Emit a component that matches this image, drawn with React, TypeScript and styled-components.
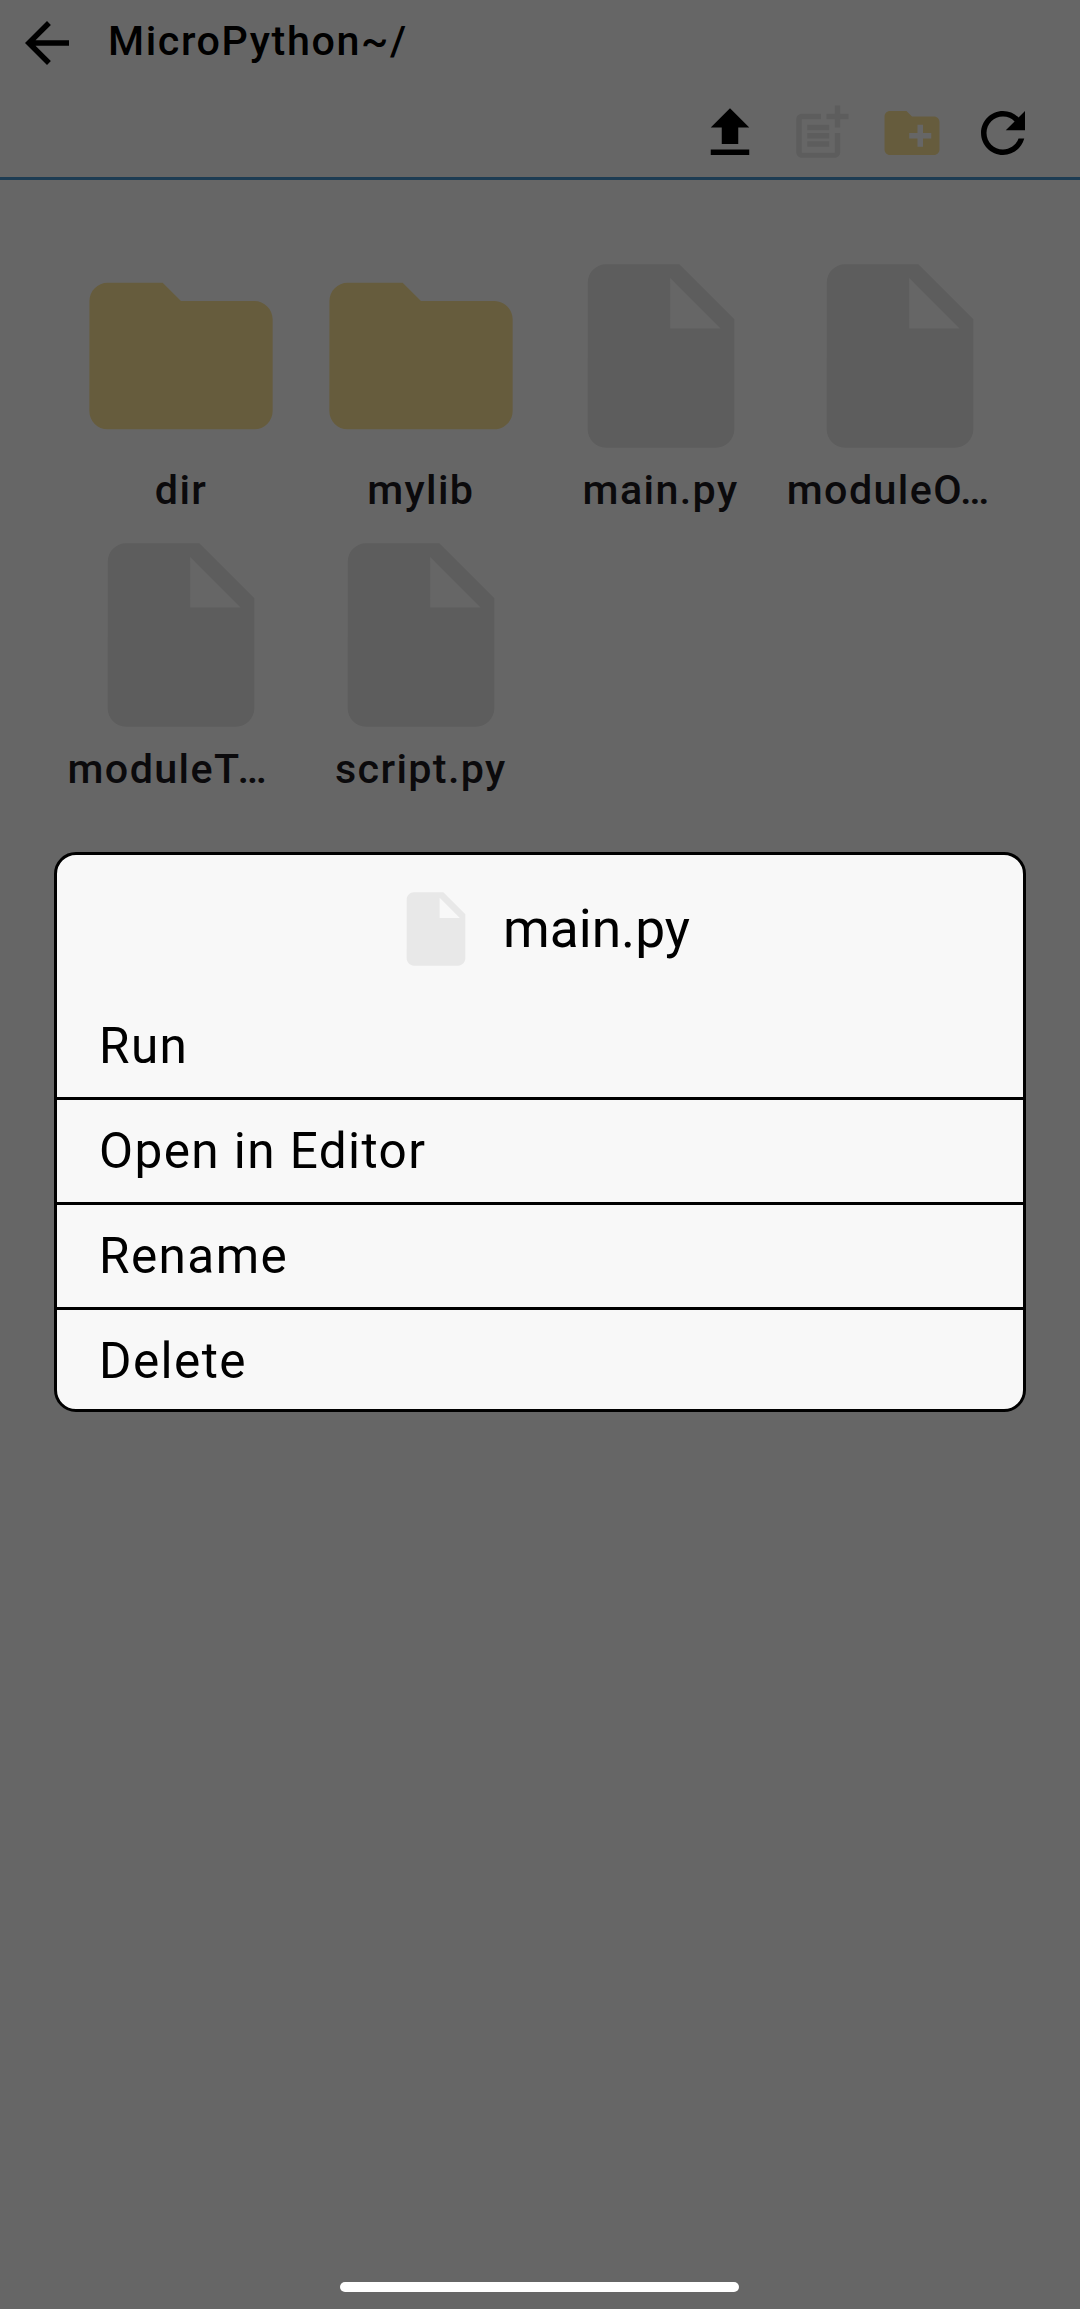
import React from "react";
import styled, { createGlobalStyle } from "styled-components";

const GlobalStyle = createGlobalStyle`
  *, *::before, *::after { box-sizing: border-box; }
  body { margin: 0; background: #ffffff; }
`;

const Screen = styled.div`
  position: relative;
  height: 2309px;
  overflow: hidden;
  background: #ffffff;
  font-family: Roboto, "Noto Sans", sans-serif;
  color: #1c1b1f;
`;

const Header = styled.header`
  display: flex;
  flex-direction: column;
  height: 180px;
  border-bottom: 3px solid #4996cf;
  color: #000000;
`;

const TitleBar = styled.div`
  display: flex;
  align-items: flex-start;
  height: 100px;
  padding: 10px 0 0 14px;
`;

const Title = styled.h1`
  margin: 0 0 0 28px;
  font-size: 41.25px;
  line-height: 62px;
  font-weight: 500;
  letter-spacing: 1.6px;
`;

const Actions = styled.nav`
  display: flex;
  justify-content: flex-end;
  gap: 25px;
  padding-right: 44px;
`;

const Svg = styled.svg<{ $size: number; $color: string }>`
  display: block;
  flex: none;
  width: ${(p) => p.$size}px;
  height: ${(p) => p.$size}px;
  fill: ${(p) => p.$color};
`;

const Grid = styled.main`
  display: grid;
  grid-template-columns: repeat(4, 239.75px);
  grid-auto-rows: 279px;
  padding: 66px 0 0 61.2px;
`;

const Entry = styled.div`
  display: flex;
  flex-direction: column;
  align-items: center;
`;

const EntryName = styled.span<{ $truncated: boolean }>`
  width: 227px;
  overflow: hidden;
  white-space: nowrap;
  text-align: ${(p) => (p.$truncated ? "left" : "center")};
  font-size: 41.25px;
  line-height: 48px;
  font-weight: 500;
  letter-spacing: 1.375px;
`;

const Ellipsis = styled.span`
  margin-left: -3px;
`;

const Scrim = styled.div`
  position: absolute;
  inset: 0;
  display: flex;
  flex-direction: column;
  align-items: center;
  padding-top: 852px;
  background: rgba(0, 0, 0, 0.6);
`;

const Dialog = styled.section`
  width: 972px;
  height: 560px;
  border: 3px solid #000000;
  border-radius: 22px;
  background: #f8f8f8;
  color: #000000;
  overflow: hidden;
`;

const DialogHeader = styled.div`
  display: flex;
  justify-content: center;
  align-items: center;
  height: 140px;
  padding: 8px 0 0 2px;
  gap: 23px;
`;

const DialogTitle = styled.h2`
  margin: 0;
  font-size: 53.3px;
  line-height: 64px;
  font-weight: 400;
`;

const MenuItem = styled.div`
  display: flex;
  align-items: center;
  height: 105px;
  padding-left: 42px;
  border-bottom: 3px solid #000000;
  font-size: 49.5px;
  line-height: 60px;
  letter-spacing: 1.41px;
`;

const HomeIndicator = styled.div`
  width: 399px;
  height: 10px;
  margin: auto 1px 17px 0;
  border-radius: 5px;
  background: #ffffff;
`;

const paths = {
  back: "M20 11H7.83l5.59-5.59L12 4l-8 8 8 8 1.41-1.41L7.83 13H20v-2z",
  upload: "M5 20h14v-2H5v2zm0-10h4v6h6v-6h4l-7-7-7 7z",
  newFile:
    "M17 19.22H5V7h7V5H5c-1.1 0-2 .9-2 2v12c0 1.1.9 2 2 2h12c1.1 0 2-.9 2-2v-7h-2v7.22zM19 2h-2v3h-3v2h3v3h2V7h3V5h-3V2zM7 9h8v2H7zM7 12h8v2H7zM7 15h8v2H7z",
  newFolder:
    "M20 6h-8l-2-2H4c-1.11 0-1.99.89-1.99 2L2 18c0 1.11.89 2 2 2h16c1.11 0 2-.89 2-2V8c0-1.11-.89-2-2-2zm-1 8h-3v3h-2v-3h-3v-2h3V9h2v3h3v2z",
  refresh:
    "M17.65 6.35C16.2 4.9 14.21 4 12 4c-4.42 0-7.99 3.58-7.99 8s3.57 8 7.99 8c3.73 0 6.84-2.55 7.73-6h-2.08c-.82 2.33-3.04 4-5.65 4-3.31 0-6-2.69-6-6s2.69-6 6-6c1.66 0 3.14.69 4.22 1.78L13 11h7V4l-2.35 2.35z",
  folder:
    "M10 4H4c-1.1 0-1.99.9-1.99 2L2 18c0 1.1.9 2 2 2h16c1.1 0 2-.9 2-2V8c0-1.1-.9-2-2-2h-8l-2-2z",
  file: "M6 2c-1.1 0-1.99.9-1.99 2L4 20c0 1.1.89 2 1.99 2H18c1.1 0 2-.9 2-2V8l-6-6H6zm7 7V3.5L18.5 9H13z",
};

const colors = { ink: "#000000", folder: "#ffe699", file: "#e8e8e8" };

type IconProps = { name: keyof typeof paths; size?: number; color?: string };

const Icon = ({ name, size = 66, color = colors.ink }: IconProps) => (
  <Svg viewBox="0 0 24 24" $size={size} $color={color} aria-hidden="true">
    <path d={paths[name]} />
  </Svg>
);

type FileEntry = { kind: "folder" | "file"; name: string; truncated?: boolean };

const entries: FileEntry[] = [
  { kind: "folder", name: "dir" },
  { kind: "folder", name: "mylib" },
  { kind: "file", name: "main.py" },
  { kind: "file", name: "moduleO", truncated: true },
  { kind: "file", name: "moduleT", truncated: true },
  { kind: "file", name: "script.py" },
];

const menu = ["Run", "Open in Editor", "Rename", "Delete"];

export default function App() {
  return (
    <Screen>
      <GlobalStyle />
      <Header>
        <TitleBar>
          <Icon name="back" />
          <Title>MicroPython~/</Title>
        </TitleBar>
        <Actions>
          <Icon name="upload" />
          <Icon name="newFile" color={colors.file} />
          <Icon name="newFolder" color={colors.folder} />
          <Icon name="refresh" />
        </Actions>
      </Header>
      <Grid>
        {entries.map((e) => (
          <Entry key={e.name}>
            <Icon name={e.kind} size={220} color={colors[e.kind]} />
            <EntryName $truncated={!!e.truncated}>
              {e.name}
              {e.truncated && <Ellipsis>…</Ellipsis>}
            </EntryName>
          </Entry>
        ))}
      </Grid>
      <Scrim>
        <Dialog>
          <DialogHeader>
            <Icon name="file" size={88} color={colors.file} />
            <DialogTitle>main.py</DialogTitle>
          </DialogHeader>
          {menu.map((m) => (
            <MenuItem key={m}>{m}</MenuItem>
          ))}
        </Dialog>
        <HomeIndicator />
      </Scrim>
    </Screen>
  );
}
